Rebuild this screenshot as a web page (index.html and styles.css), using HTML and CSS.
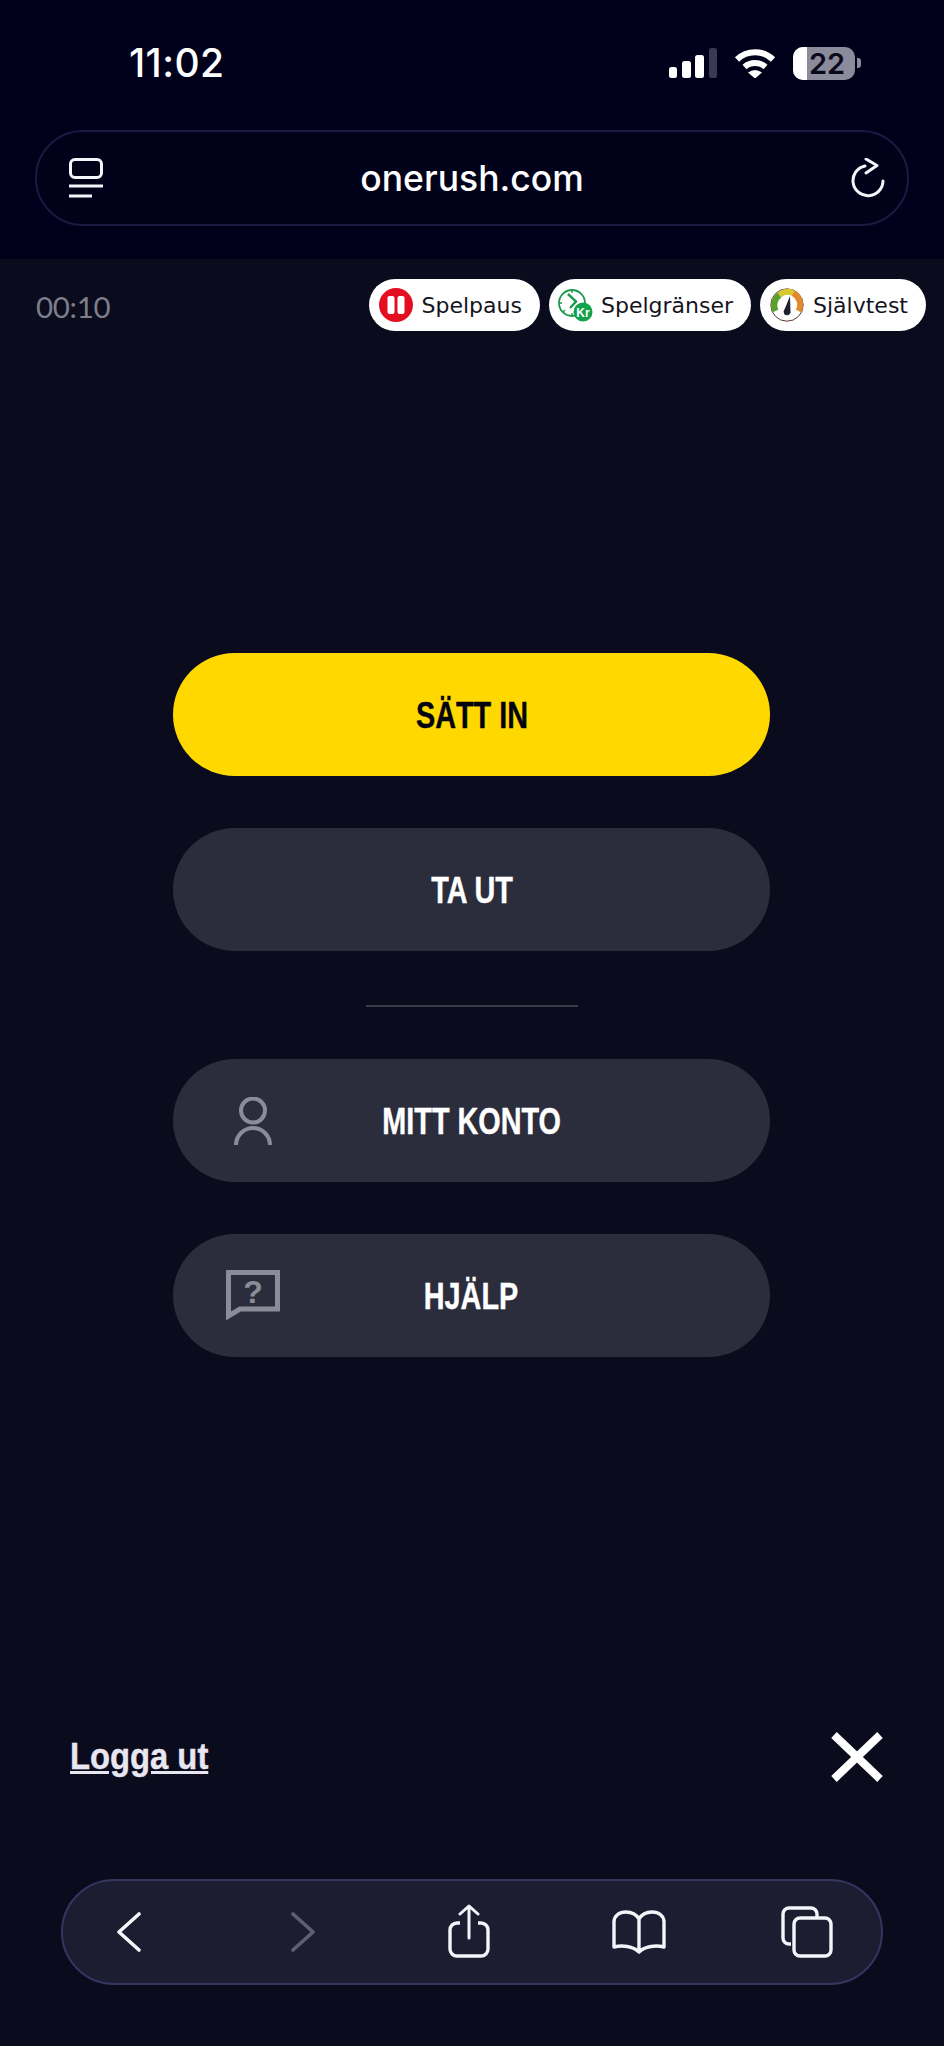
FILE: index.html
```html
<!DOCTYPE html>
<html lang="sv">
<head>
<meta charset="utf-8">
<title>onerush.com</title>
<link rel="stylesheet" href="styles.css">
</head>
<body>
<header class="top">
  <div class="status">
    <span class="time">11:02</span>
    <div class="status-icons">
      <svg class="signal" width="48" height="30" viewBox="0 0 48 30"><rect x="0" y="19" width="8" height="11" rx="2.500" fill="#fff"/><rect x="13" y="13" width="9" height="17" rx="2.500" fill="#fff"/><rect x="26" y="7" width="9" height="23" rx="2.500" fill="#fff"/><rect x="40" y="0" width="8" height="30" rx="2.500" fill="#3a3a52"/></svg>
      <svg class="wifi" width="42" height="30" viewBox="0 0 42 30"><path d="M3 11.500A26 26 0 0 1 39 11.500M10.500 19A16 16 0 0 1 31.500 19" fill="none" stroke="#fff" stroke-width="6"/><path d="M14 24.500Q21 19.500 28 24.500L21 30.500Z" fill="#fff"/></svg>
      <div class="battery"><span class="battery-fill"></span><span class="battery-num">22</span></div>
      <span class="battery-nub"></span>
    </div>
  </div>
  <div class="address">
    <svg width="34" height="40" viewBox="0 0 34 40"><rect x="1.500" y="1.500" width="31" height="18" rx="4.500" fill="none" stroke="#f4f4fa" stroke-width="3"/><path d="M0 28H34M0 38H23" stroke="#f4f4fa" stroke-width="3"/></svg>
    <span class="url">onerush.com</span>
    <svg width="34" height="40" viewBox="0 0 34 40"><path d="M14 8A15 15 0 1 0 32 23" fill="none" stroke="#f4f4fa" stroke-width="3" stroke-linecap="round"/><path d="M15 1L26 7.500L15 15" fill="none" stroke="#f4f4fa" stroke-width="3" stroke-linecap="round" stroke-linejoin="round"/></svg>
  </div>
</header>
<main class="page">
  <div class="bar">
    <span class="timer">00:10</span>
    <div class="pills">
      <a class="pill">
        <svg width="34" height="34" viewBox="0 0 34 34"><circle cx="17" cy="17" r="17" fill="#e30f20"/><rect x="8.500" y="8" width="7" height="18" rx="2" fill="#fff"/><rect x="18.500" y="8" width="7" height="18" rx="2" fill="#fff"/></svg>
        <span>Spelpaus</span>
      </a>
      <a class="pill pill-limits">
        <svg width="36" height="34" viewBox="0 0 36 34"><circle cx="14" cy="15" r="13" fill="none" stroke="#1b9a4b" stroke-width="1.800"/><path d="M10 6L18 13.500L12 20" fill="none" stroke="#1b9a4b" stroke-width="2.400"/><path d="M14 2v3M1 15h3M5 24l2-2M14 25v3" stroke="#1b9a4b" stroke-width="1.400"/><circle cx="25" cy="24" r="9.500" fill="#12a24a"/><text x="25" y="28.500" class="kr">Kr</text></svg>
        <span>Spelgränser</span>
      </a>
      <a class="pill">
        <svg width="34" height="34" viewBox="0 0 34 34"><circle cx="17" cy="17" r="16.200" fill="none" stroke="#5a3a30" stroke-width="1"/><path d="M5.500 23A13 13 0 0 1 9.500 7" fill="none" stroke="#5aa02c" stroke-width="6"/><path d="M9.500 7A13 13 0 0 1 23 5" fill="none" stroke="#d7c92e" stroke-width="6"/><path d="M23 5A13 13 0 0 1 28.500 23" fill="none" stroke="#e08a2e" stroke-width="6"/><path d="M13.500 24L20 8L20.500 25Z" fill="#1d2230"/><circle cx="17" cy="24" r="3.200" fill="#1d2230"/></svg>
        <span>Självtest</span>
      </a>
    </div>
  </div>
  <nav class="menu">
    <a class="btn btn-yellow"><span></span><span class="label">SÄTT IN</span></a>
    <a class="btn"><span></span><span class="label">TA UT</span></a>
    <hr class="rule">
    <a class="btn">
      <svg class="btn-icon btn-icon-person" width="38" height="48" viewBox="0 0 38 48"><circle cx="19" cy="13.500" r="12" fill="none" stroke="#8b8c99" stroke-width="4"/><path d="M2 48A17 17 0 0 1 36 48" fill="none" stroke="#8b8c99" stroke-width="4"/></svg>
      <span class="label">MITT KONTO</span>
    </a>
    <a class="btn">
      <svg class="btn-icon btn-icon-help" width="54" height="50" viewBox="0 0 54 50"><path d="M2.500 2.500H51.500V39H14L2.500 46Z" fill="none" stroke="#8b8c99" stroke-width="5"/><text x="27" y="33" class="help-q">?</text></svg>
      <span class="label">HJÄLP</span>
    </a>
  </nav>
  <div class="foot">
    <a class="logout">Logga ut</a>
    <svg width="52" height="50" viewBox="0 0 52 50"><path d="M3 3L49 47M49 3L3 47" stroke="#fff" stroke-width="8"/></svg>
  </div>
  <div class="toolbar">
    <svg width="25" height="40" viewBox="0 0 25 40"><path d="M23 2L3 20L23 38" fill="none" stroke="#f4f4fa" stroke-width="3.600" stroke-linecap="round" stroke-linejoin="round"/></svg>
    <svg class="fwd" width="25" height="40" viewBox="0 0 25 40"><path d="M2 2L22 20L2 38" fill="none" stroke="#5f606e" stroke-width="3.600" stroke-linecap="round" stroke-linejoin="round"/></svg>
    <svg class="share" width="42" height="54" viewBox="0 0 42 54"><path d="M12 19H9A7 7 0 0 0 2 26V45A7 7 0 0 0 9 52H33A7 7 0 0 0 40 45V26A7 7 0 0 0 33 19H30" fill="none" stroke="#f4f4fa" stroke-width="3.400"/><path d="M21 34V2M12 10L21 2L30 10" fill="none" stroke="#f4f4fa" stroke-width="3" stroke-linecap="round" stroke-linejoin="round"/></svg>
    <svg class="book" width="54" height="44" viewBox="0 0 54 44"><path d="M27 9C24 4 20 2 14 2C7 2 2 6 2 12V37C10 35 21 36 27 42C33 36 44 35 52 37V12C52 6 47 2 40 2C34 2 30 4 27 9ZM27 9V41" fill="none" stroke="#f4f4fa" stroke-width="3.400" stroke-linejoin="round"/></svg>
    <svg class="tabs" width="52" height="52" viewBox="0 0 52 52"><path d="M10 38H8A6 6 0 0 1 2 32V8A6 6 0 0 1 8 2H30A6 6 0 0 1 36 8V11" fill="none" stroke="#f4f4fa" stroke-width="3.400"/><rect x="13" y="12" width="37" height="38" rx="6" fill="none" stroke="#f4f4fa" stroke-width="3.400"/></svg>
  </div>
</main>
</body>
</html>
```
FILE: styles.css
```css
* { box-sizing: border-box; }
html, body { margin: 0; padding: 0; }
body {
  width: 944px;
  height: 2046px;
  background: #0a0b1c;
  overflow: hidden;
  display: flex;
  flex-direction: column;
  font-family: "Inter", "Liberation Sans", sans-serif;
}
.top {
  height: 259px;
  background: #00001a;
  padding: 0 35px;
}
.status {
  height: 130px;
  display: flex;
  justify-content: space-between;
  padding: 48px 48px 0 94px;
}
.time {
  color: #fff;
  font-size: 39px;
  font-weight: 500;
  line-height: 30px;
  letter-spacing: 0.4px;
}
.status-icons {
  display: flex;
  align-items: flex-start;
}
.signal { margin-right: 17px; }
.wifi { margin-right: 17px; }
.battery {
  position: relative;
  width: 62px;
  height: 33px;
  margin-top: -1px;
  border-radius: 10px;
  background: #8b8b9b;
  overflow: hidden;
  text-align: center;
}
.battery-fill {
  position: absolute;
  left: 0;
  top: 0;
  bottom: 0;
  width: 14px;
  background: #fff;
}
.battery-num {
  position: relative;
  display: block;
  margin-left: 6px;
  font-size: 29px;
  line-height: 33px;
  font-weight: 600;
  color: #0a0a1c;
}
.battery-nub {
  width: 4px;
  height: 10px;
  margin: 10px 0 0 2px;
  border-radius: 0 3px 3px 0;
  background: #8b8b9b;
}
.address {
  height: 96px;
  border: 2px solid #1a1a42;
  border-radius: 48px;
  background: #01011a;
  display: flex;
  align-items: center;
  justify-content: space-between;
  padding: 0 22px 0 32px;
}
.url {
  margin-right: 10px;
  color: #fff;
  font-size: 35.500px;
  font-weight: 500;
}
.page {
  flex: 1;
  display: flex;
  flex-direction: column;
}
.bar {
  height: 52px;
  margin: 20px 18px 0 36px;
  display: flex;
  align-items: center;
  justify-content: space-between;
}
.timer {
  margin-top: 2px;
  color: #7d7e8c;
  font-family: "Lato", sans-serif;
  font-size: 29.500px;
  font-weight: 400;
  letter-spacing: -0.3px;
}
.pills {
  display: flex;
  gap: 9px;
}
.pill {
  height: 52px;
  border-radius: 26px;
  background: #fff;
  display: flex;
  align-items: center;
  gap: 9px;
  padding: 0 18px 0 10px;
  color: #14141e;
  font-family: "DejaVu Sans", sans-serif;
  font-size: 22px;
}
.pill-limits {
  gap: 7px;
  padding: 0 18px 0 9px;
}
.kr {
  fill: #fff;
  font-family: "Liberation Sans", sans-serif;
  font-size: 12px;
  font-weight: 700;
  text-anchor: middle;
}
.menu {
  width: 597px;
  margin: 322px 0 0 173px;
  display: flex;
  flex-direction: column;
}
.btn {
  height: 123px;
  margin-bottom: 52px;
  border-radius: 62px;
  background: #2c2d3c;
  color: #fff;
  display: grid;
  grid-template-columns: 1fr auto 1fr;
  align-items: center;
  font-family: "Liberation Sans", sans-serif;
  font-size: 36px;
  font-weight: 700;
}
.label {
  display: inline-block;
  margin-top: 3px;
  transform: scaleX(0.8);
  -webkit-text-stroke: 0.4px currentColor;
}
.btn-yellow {
  background: #ffd800;
  color: #03030f;
}
.btn-icon-person { margin-left: 61px; }
.btn-icon-help { margin-left: 53px; margin-top: -2px; }
.help-q {
  fill: #8b8c99;
  font-family: "Liberation Sans", sans-serif;
  font-size: 32px;
  font-weight: 700;
  text-anchor: middle;
}
.rule {
  width: 212px;
  height: 2px;
  margin: 2px 0 52px 193px;
  border: 0;
  background: #3a3b4b;
}
.foot {
  margin: 323px 61px 0 70px;
  display: flex;
  align-items: center;
  justify-content: space-between;
}
.logout {
  display: inline-block;
  color: #e8e6f0;
  font-family: "Liberation Sans", sans-serif;
  font-size: 36px;
  font-weight: 700;
  text-decoration: underline;
  transform: scaleX(0.91);
  transform-origin: left center;
  -webkit-text-stroke: 0.4px currentColor;
}
.toolbar {
  height: 106px;
  margin: 97px 61px 0 61px;
  border: 2px solid #34365f;
  border-radius: 53px;
  background: #1c1d31;
  display: flex;
  align-items: center;
  padding-left: 53px;
}
.fwd { margin-left: 150px; }
.share { margin-left: 132px; margin-top: -2px; }
.book { margin-left: 122px; }
.tabs { margin-left: 115px; }
```
